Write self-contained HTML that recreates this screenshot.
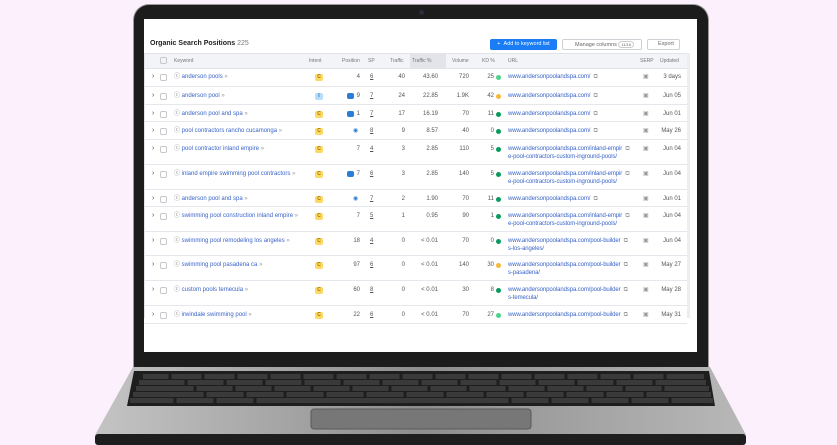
<!DOCTYPE html>
<html><head><meta charset="utf-8"><style>
*{margin:0;padding:0;box-sizing:border-box}
body{width:837px;height:445px;background:#fbf0fb;position:relative;overflow:hidden;font-family:"Liberation Sans",sans-serif}
.lid{position:absolute;left:133px;top:4px;width:576px;height:366px;background:#1c1c1c;border-radius:16px 16px 0 0;border:1px solid #9a9a9a;border-bottom:none}
.cam{position:absolute;left:419px;top:10px;width:5px;height:5px;border-radius:50%;background:#2c2c3c}
.screen{position:absolute;left:144px;top:19px;width:553px;height:333px;background:#fff;overflow:hidden}
.base{position:absolute;left:0;top:0}
.t{position:absolute;font-size:6px;color:#555;white-space:nowrap;line-height:8px}
.a{color:#3a64c8}
.u{font-size:6px;letter-spacing:-0.1px}
.row{position:absolute;left:0;width:543px;border-bottom:1px solid #e6e7ec}
.ic{position:absolute;width:8px;height:7px;border-radius:2px;font-size:5px;text-align:center;line-height:7px;font-weight:bold}
.dot{position:absolute;width:5px;height:5px;border-radius:50%}
.cb{position:absolute;left:16px;width:7px;height:7px;border:1px solid #c8c8cc;border-radius:2px}
</style></head><body>
<div class="lid"></div>
<div class="cam"></div>
<svg class="base" width="837" height="445">
<defs><linearGradient id="g" x1="0" x2="1"><stop offset="0" stop-color="#c4c4c4"/><stop offset=".5" stop-color="#8e8e8e"/><stop offset="1" stop-color="#b8b8b8"/></linearGradient></defs>
<polygon points="133,367 710,367 746,435 95,435" fill="url(#g)"/>
<rect x="95" y="434" width="651" height="11" rx="3" fill="#1e1e1e"/>
<polygon points="134,371 709,371 715,406 127,406" fill="#1e1e1e"/>
<g fill="#3a3a3a">
<rect x="143" y="374" width="561" height="5"/>
<rect x="139" y="380" width="567" height="5"/>
<rect x="136" y="386" width="573" height="5"/>
<rect x="133" y="392" width="578" height="5"/>
<rect x="130" y="398" width="583" height="5"/>
</g>
<g stroke="#1e1e1e" stroke-width="3">
<path d="M170,374v5M203,374v5M236,374v5M269,374v5M302,374v5M335,374v5M368,374v5M401,374v5M434,374v5M467,374v5M500,374v5M533,374v5M566,374v5M599,374v5M632,374v5M665,374v5"/>
<path d="M186,380v5M225,380v5M264,380v5M303,380v5M342,380v5M381,380v5M420,380v5M459,380v5M498,380v5M537,380v5M576,380v5M615,380v5M654,380v5"/>
<path d="M195,386v5M234,386v5M273,386v5M312,386v5M351,386v5M390,386v5M429,386v5M468,386v5M507,386v5M546,386v5M585,386v5M624,386v5M663,386v5"/>
<path d="M205,392v5M245,392v5M285,392v5M325,392v5M365,392v5M405,392v5M445,392v5M485,392v5M525,392v5M565,392v5M605,392v5M645,392v5"/>
<path d="M175,398v5M215,398v5M255,398v5M510,398v5M550,398v5M590,398v5M630,398v5M670,398v5"/>
</g>
<rect x="311" y="409" width="220" height="20" rx="3" fill="#777" stroke="#5a5a5a"/>
</svg>
<div class="screen">
<div class="t" style="left:6px;top:21px;font-size:7px;font-weight:bold;color:#222">Organic Search Positions <span style="font-weight:normal;color:#777">225</span></div>
<div style="position:absolute;left:346px;top:20px;width:67px;height:11px;background:#1a7df5;border-radius:2px;color:#fff;font-size:5.5px;line-height:11px;text-align:center">+ &nbsp;Add to keyword list</div>
<div style="position:absolute;left:418px;top:20px;width:80px;height:11px;border:1px solid #cfd0d6;border-radius:2px;color:#666;font-size:5.5px;line-height:9px;padding-left:12px">Manage columns <span style="border:1px solid #ccc;border-radius:4px;font-size:4px;padding:0 2px">11/16</span></div>
<div style="position:absolute;left:503px;top:20px;width:33px;height:11px;border:1px solid #cfd0d6;border-radius:2px;color:#666;font-size:5.5px;line-height:9px;padding-left:10px">Export</div>
<div style="position:absolute;left:0;top:34px;width:543px;height:16px;background:#f3f4f8;border-top:1px solid #e2e3e8;border-bottom:1px solid #e2e3e8"></div>
<div style="position:absolute;left:266px;top:34px;width:36px;height:16px;background:#e3e4ea"></div>
<div style="position:absolute;left:543px;top:34px;width:3px;height:265px;background:#eceef2"></div>
<div style="position:absolute;left:0;top:34px;width:1px;height:265px;background:#e2e3e8"></div>
<div class="cb" style="top:38px"></div>
<div class="t" style="top:38px;left:30px;font-size:5px;color:#777">Keyword</div>
<div class="t" style="top:38px;left:165px;font-size:5px;color:#777">Intent</div>
<div class="t" style="top:38px;left:198px;font-size:5px;color:#777">Position</div>
<div class="t" style="top:38px;left:224px;font-size:5px;color:#777">SP</div>
<div class="t" style="top:38px;left:246px;font-size:5px;color:#777">Traffic</div>
<div class="t" style="top:38px;left:268px;font-size:5px;color:#777">Traffic %</div>
<div class="t" style="top:38px;left:308px;font-size:5px;color:#777">Volume</div>
<div class="t" style="top:38px;left:338px;font-size:5px;color:#777">KD %</div>
<div class="t" style="top:38px;left:364px;font-size:5px;color:#777">URL</div>
<div class="t" style="top:38px;left:496px;font-size:5px;color:#777">SERP</div>
<div class="t" style="top:38px;left:516px;font-size:5px;color:#777">Updated</div>
<div id="rows"></div>
</div>
<script>
var R=[
[49,68,"anderson pools","C","","4","6","40","43.60","720","25","#4cd18a",["www.andersonpoolandspa.com/"],"3 days"],
[68,86,"anderson pool","I","sq","9","7","24","22.85","1.9K","42","#f6b83a",["www.andersonpoolandspa.com/"],"Jun 05"],
[86,103,"anderson pool and spa","C","sq","1","7","17","16.19","70","11","#0a9a5e",["www.andersonpoolandspa.com/"],"Jun 01"],
[103,121,"pool contractors rancho cucamonga","C","pin","","8","9","8.57","40","0","#0a9a5e",["www.andersonpoolandspa.com/"],"May 26"],
[121,146,"pool contractor inland empire","C","","7","4","3","2.85","110","5","#0a9a5e",["www.andersonpoolandspa.com/inland-empir","e-pool-contractors-custom-inground-pools/"],"Jun 04"],
[146,171,"inland empire swimming pool contractors","C","sq","7","6","3","2.85","140","5","#0a9a5e",["www.andersonpoolandspa.com/inland-empir","e-pool-contractors-custom-inground-pools/"],"Jun 04"],
[171,188,"anderson pool and spa","C","pin","","7","2","1.90","70","11","#0a9a5e",["www.andersonpoolandspa.com/"],"Jun 01"],
[188,213,"swimming pool construction inland empire","C","","7","5","1","0.95","90","1","#0a9a5e",["www.andersonpoolandspa.com/inland-empir","e-pool-contractors-custom-inground-pools/"],"Jun 04"],
[213,237,"swimming pool remodeling los angeles","C","","18","4","0","< 0.01","70","0","#0a9a5e",["www.andersonpoolandspa.com/pool-builder","s-los-angeles/"],"Jun 04"],
[237,262,"swimming pool pasadena ca","C","","97","6","0","< 0.01","140","30","#f6b83a",["www.andersonpoolandspa.com/pool-builder","s-pasadena/"],"May 27"],
[262,287,"custom pools temecula","C","","60","8","0","< 0.01","30","8","#0a9a5e",["www.andersonpoolandspa.com/pool-builder","s-temecula/"],"May 28"],
[287,305,"irwindale swimming pool","C","","22","6","0","< 0.01","70","27","#4cd18a",["www.andersonpoolandspa.com/pool-builder"],"May 31"]];
var h="";
R.forEach(function(r){
var y=r[0]+5,H=r[1]-r[0];
h+='<div class="row" style="top:'+r[0]+'px;height:'+H+'px"></div>';
h+='<div class="t" style="left:8px;top:'+y+'px;color:#444;font-size:7px">›</div>';
h+='<div class="cb" style="top:'+(y+1)+'px"></div>';
h+='<div class="t" style="left:30px;top:'+y+'px;color:#888">ⓒ <span class="a">'+r[2]+'</span> <span style="color:#999">»</span></div>';
h+='<div class="ic" style="left:171px;top:'+(y+1)+'px;background:'+(r[3]=="C"?"#fcd964;color:#a06d00":"#b8dcfb;color:#2a6fc0")+'">'+r[3]+'</div>';
if(r[4]=="sq")h+='<div class="ic" style="left:'+(r[5]?203:205)+'px;top:'+(y+1)+'px;width:7px;height:6px;background:#2a7dd8"></div>';
if(r[4]=="pin")h+='<div class="t" style="left:209px;top:'+y+'px;color:#2a7dd8">◉</div>';
h+='<div class="t" style="right:'+(553-216)+'px;top:'+y+'px">'+r[5]+'</div>';
h+='<div class="t" style="left:226px;top:'+y+'px;text-decoration:underline">'+r[6]+'</div>';
h+='<div class="t" style="right:'+(553-261)+'px;top:'+y+'px">'+r[7]+'</div>';
h+='<div class="t" style="right:'+(553-294)+'px;top:'+y+'px">'+r[8]+'</div>';
h+='<div class="t" style="right:'+(553-325)+'px;top:'+y+'px">'+r[9]+'</div>';
h+='<div class="t" style="right:'+(553-350)+'px;top:'+y+'px">'+r[10]+'</div>';
h+='<div class="dot" style="left:352px;top:'+(y+1.5)+'px;background:'+r[11]+'"></div>';
var u=r[12].slice();u[0]+=' &nbsp;<span style="color:#999">⧉</span>';
h+='<div class="t a u" style="left:364px;top:'+y+'px">'+u.join('<br>')+'</div>';
h+='<div class="t" style="left:499px;top:'+y+'px;color:#999">▣</div>';
h+='<div class="t" style="right:'+(553-537)+'px;top:'+y+'px">'+r[13]+'</div>';
});
document.getElementById('rows').innerHTML=h;
</script>
</body></html>
